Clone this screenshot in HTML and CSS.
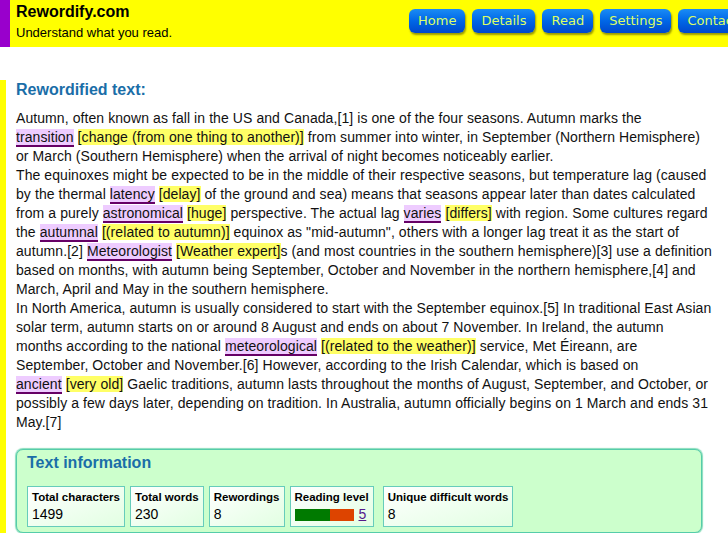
FILE: index.html
```html
<!DOCTYPE html>
<html>
<head>
<meta charset="utf-8">
<link rel="stylesheet" href="styles.css">
</head>
<body>
<header class="top">
  <div class="brand">
    <div class="site">Rewordify.com</div>
    <div class="tag">Understand what you read.</div>
  </div>
  <nav class="nav">
    <a class="btn">Home</a>
    <a class="btn">Details</a>
    <a class="btn">Read</a>
    <a class="btn">Settings</a>
    <a class="btn">Contact</a>
  </nav>
</header>
<main class="main">
  <h2 class="head">Rewordified text:</h2>
  <div class="text">Autumn, often known as fall in the US and Canada,[1] is one of the four seasons. Autumn marks the <span class="pair"><span class="hw">transition</span> <span class="rw">[change (from one thing to another)]</span></span> from summer into winter, in September (Northern Hemisphere) or March (Southern Hemisphere) when the arrival of night becomes noticeably earlier.<br>The equinoxes might be expected to be in the middle of their respective seasons, but temperature lag (caused by the thermal <span class="pair"><span class="hw">latency</span> <span class="rw">[delay]</span></span> of the ground and sea) means that seasons appear later than dates calculated from a purely <span class="pair"><span class="hw">astronomical</span> <span class="rw">[huge]</span></span> perspective. The actual lag <span class="pair"><span class="hw">varies</span> <span class="rw">[differs]</span></span> with region. Some cultures regard the <span class="pair"><span class="hw">autumnal</span> <span class="rw">[(related to autumn)]</span></span> equinox as "mid-autumn", others with a longer lag treat it as the start of autumn.[2] <span class="pair"><span class="hw">Meteorologist</span> <span class="rw">[Weather expert]</span>s</span> (and most countries in the southern hemisphere)[3] use a definition based on months, with autumn being September, October and November in the northern hemisphere,[4] and March, April and May in the southern hemisphere.<br>In North America, autumn is usually considered to start with the September equinox.[5] In traditional East Asian solar term, autumn starts on or around 8 August and ends on about 7 November. In Ireland, the autumn months according to the national <span class="pair"><span class="hw">meteorological</span> <span class="rw">[(related to the weather)]</span></span> service, Met Éireann, are September, October and November.[6] However, according to the Irish Calendar, which is based on <span class="pair"><span class="hw">ancient</span> <span class="rw">[very old]</span></span> Gaelic traditions, autumn lasts throughout the months of August, September, and October, or possibly a few days later, depending on tradition. In Australia, autumn officially begins on 1 March and ends 31 May.[7]</div>
  <section class="info">
    <h3 class="info-title">Text information</h3>
    <div class="stats">
      <div class="stat"><div class="label">Total characters</div><div class="value">1499</div></div>
      <div class="stat"><div class="label">Total words</div><div class="value">230</div></div>
      <div class="stat"><div class="label">Rewordings</div><div class="value">8</div></div>
      <div class="stat stat-wide"><div class="label">Reading level</div><div class="value level"><span class="bar"><span class="bar-g"></span><span class="bar-o"></span></span><a class="lvl" href="#">5</a></div></div>
      <div class="stat"><div class="label">Unique difficult words</div><div class="value">8</div></div>
    </div>
  </section>
</main>
</body>
</html>
```
FILE: styles.css
```css
html, body {
  margin: 0;
  padding: 0;
  background: #ffffff;
}
body {
  font-family: "Liberation Sans", Arial, sans-serif;
  color: #000;
  width: 728px;
  height: 533px;
  overflow: hidden;
}
.top {
  display: flex;
  align-items: flex-start;
  height: 47px;
  background: #ffff00;
  border-left: 10px solid #9900cc;
  box-sizing: border-box;
  padding-left: 6px;
  overflow: hidden;
}
.brand {
  padding-top: 3px;
  width: 393px;
  flex-shrink: 0;
}
.site {
  font-size: 16px;
  font-weight: bold;
  line-height: 18px;
}
.tag {
  font-size: 13px;
  line-height: 16px;
  margin-top: 4px;
}
.nav {
  display: flex;
  gap: 7px;
  padding-top: 9px;
  flex-shrink: 0;
}
.btn {
  display: block;
  height: 24px;
  line-height: 24px;
  padding: 0 9px;
  border-radius: 6px;
  background: linear-gradient(to bottom, #1a8cf5 0%, #0066e6 50%, #0048cc 100%);
  box-shadow: 1px 2px 2px rgba(70, 70, 0, 0.55);
  color: #ddff66;
  font-family: "DejaVu Sans", Verdana, sans-serif;
  font-size: 13px;
  white-space: nowrap;
}
.main {
  margin-top: 33px;
  border-left: 6px solid #ffff00;
  padding-left: 10px;
  height: 453px;
}
.head, .info-title {
  margin: 0;
  font-size: 16px;
  line-height: 20px;
  font-weight: bold;
  color: #1a6ea8;
}
.text {
  margin-top: 9px;
  width: 697px;
  font-size: 14px;
  line-height: 19px;
  letter-spacing: 0.08px;
  color: #111;
}
.pair {
  white-space: nowrap;
}
.hw {
  background: #eeccff;
  border-bottom: 2px solid #660066;
}
.rw {
  background: #ffff66;
}
.info {
  margin-top: 17px;
  width: 686px;
  box-sizing: border-box;
  background: #ccffcc;
  border: 1px solid #55ccaa;
  border-radius: 7px;
  box-shadow: 0 0 1px 1px #88ddbb;
  padding: 3px 10px 5px 10px;
  overflow: hidden;
}
.stats {
  display: flex;
  gap: 5px;
  margin-top: 13px;
}
.stat {
  border: 1px solid #66ccbb;
  background: linear-gradient(to bottom right, #ffffff 0%, #e2ffe2 100%);
  padding: 3px 4px 2px 4px;
}
.stat-wide {
  margin-right: 4px;
}
.label {
  font-size: 11.5px;
  font-weight: bold;
  line-height: 15px;
  white-space: nowrap;
}
.value {
  font-size: 14px;
  line-height: 19px;
}
.level {
  display: flex;
  align-items: center;
  gap: 5px;
}
.bar {
  display: flex;
  height: 12px;
}
.bar-g {
  width: 35px;
  background: #007a00;
}
.bar-o {
  width: 24px;
  background: #dd4400;
}
.lvl {
  color: #551a8b;
  text-decoration: underline;
}
```
